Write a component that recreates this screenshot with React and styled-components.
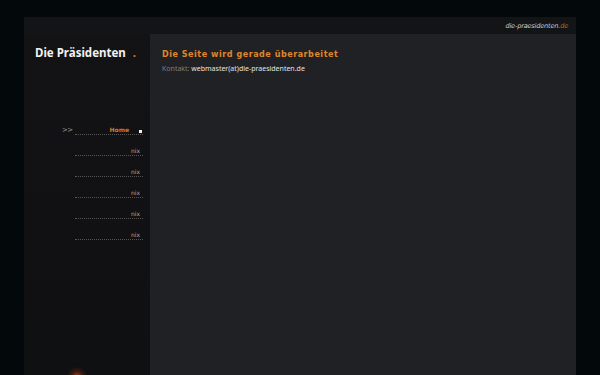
import React from "react";
import styled, { createGlobalStyle } from "styled-components";

const Global = createGlobalStyle`
  html, body { margin: 0; padding: 0; background: #03080b; height: 100%; overflow: hidden; }
  #root { height: 100%; }
`;

const Page = styled.div`
  padding: 17px 24px 0 24px;
  height: 375px;
  box-sizing: border-box;
  font-family: "DejaVu Sans", Verdana, sans-serif;
`;

const Frame = styled.div`
  width: 552px;
  height: 358px;
  background: #131416;
  display: flex;
  flex-direction: column;
`;

const TopBar = styled.div`
  height: 17px;
  display: flex;
  align-items: center;
  justify-content: flex-end;
  padding-right: 8px;
  font-size: 6.6px;
  font-style: italic;
  color: #d0d0d0;
  letter-spacing: -0.2px;
  white-space: nowrap;
`;

const Tld = styled.span`
  color: #c7661c;
`;

const Body = styled.div`
  flex: 1;
  display: flex;
`;

const Sidebar = styled.div`
  width: 126px;
  position: relative;
  background: linear-gradient(180deg, #131315 0%, #111113 60%, #0f1012 100%);
  overflow: hidden;
`;

const Logo = styled.div`
  margin: 12px 0 0 11px;
  font-family: "Noto Sans", "DejaVu Sans", sans-serif;
  font-weight: bold;
  font-size: 11.5px;
  line-height: 14px;
  color: #f2f2f2;
  white-space: nowrap;
`;

const Dot = styled.span`
  color: #d9761f;
  margin-left: 7px;
`;

const Menu = styled.ul`
  list-style: none;
  margin: 64px 0 0 0;
  padding: 0;
  display: flex;
  flex-direction: column;
  gap: 10px;
`;

const Item = styled.li`
  position: relative;
  margin-left: 51px;
  height: 10px;
  border-bottom: 1px dotted #555;
  display: flex;
  justify-content: flex-end;
  align-items: flex-end;
  padding-right: ${(p) => (p.$active ? "14px" : "3px")};
  box-sizing: content-box;
  width: ${(p) => (p.$active ? "54px" : "65px")};
  font-family: "DejaVu Sans", sans-serif;
  font-size: 6px;
  line-height: 8px;
  white-space: nowrap;
  color: ${(p) => (p.$active ? "#d7782a" : "#a8a8a8")};
  font-weight: ${(p) => (p.$active ? "bold" : "normal")};
`;

const Arrows = styled.span`
  position: absolute;
  left: -13px;
  bottom: 0;
  font-size: 7px;
  font-weight: normal;
  color: #9a9a9a;
  letter-spacing: -0.5px;
`;

const Square = styled.span`
  position: absolute;
  right: 1px;
  bottom: 1px;
  width: 3px;
  height: 3px;
  background: #f0f0f0;
`;

const Glow = styled.div`
  position: absolute;
  left: 43px;
  bottom: -12px;
  width: 20px;
  height: 20px;
  border-radius: 50%;
  background: radial-gradient(circle, rgba(200, 70, 20, 0.9) 0%, rgba(120, 40, 10, 0.4) 40%, rgba(0,0,0,0) 75%);
`;

const Main = styled.div`
  flex: 1;
  background: #1f2125;
  padding: 16px 12px 0 12px;
`;

const Heading = styled.h1`
  margin: 0;
  font-family: "DejaVu Sans", sans-serif;
  font-size: 8px;
  line-height: 10px;
  font-weight: bold;
  letter-spacing: 0.55px;
  color: #e0862a;
  white-space: nowrap;
`;

const Contact = styled.p`
  margin: 4px 0 0 0;
  font-family: "Noto Sans", sans-serif;
  font-size: 7px;
  line-height: 9px;
  color: #7d7f82;
  white-space: nowrap;
`;

const Mail = styled.span`
  color: #e4e4e4;
`;

const items = ["nix", "nix", "nix", "nix", "nix"];

export default function App() {
  return (
    <>
      <Global />
      <Page>
        <Frame>
          <TopBar>
            die-praesidenten.<Tld>de</Tld>
          </TopBar>
          <Body>
            <Sidebar>
              <Logo>
                Die Präsidenten<Dot>.</Dot>
              </Logo>
              <Menu>
                <Item $active>
                  <Arrows>&gt;&gt;</Arrows>
                  Home
                  <Square />
                </Item>
                {items.map((t, i) => (
                  <Item key={i}>{t}</Item>
                ))}
              </Menu>
              <Glow />
            </Sidebar>
            <Main>
              <Heading>Die Seite wird gerade überarbeitet</Heading>
              <Contact>
                Kontakt: <Mail>webmaster(at)die-praesidenten.de</Mail>
              </Contact>
            </Main>
          </Body>
        </Frame>
      </Page>
    </>
  );
}
